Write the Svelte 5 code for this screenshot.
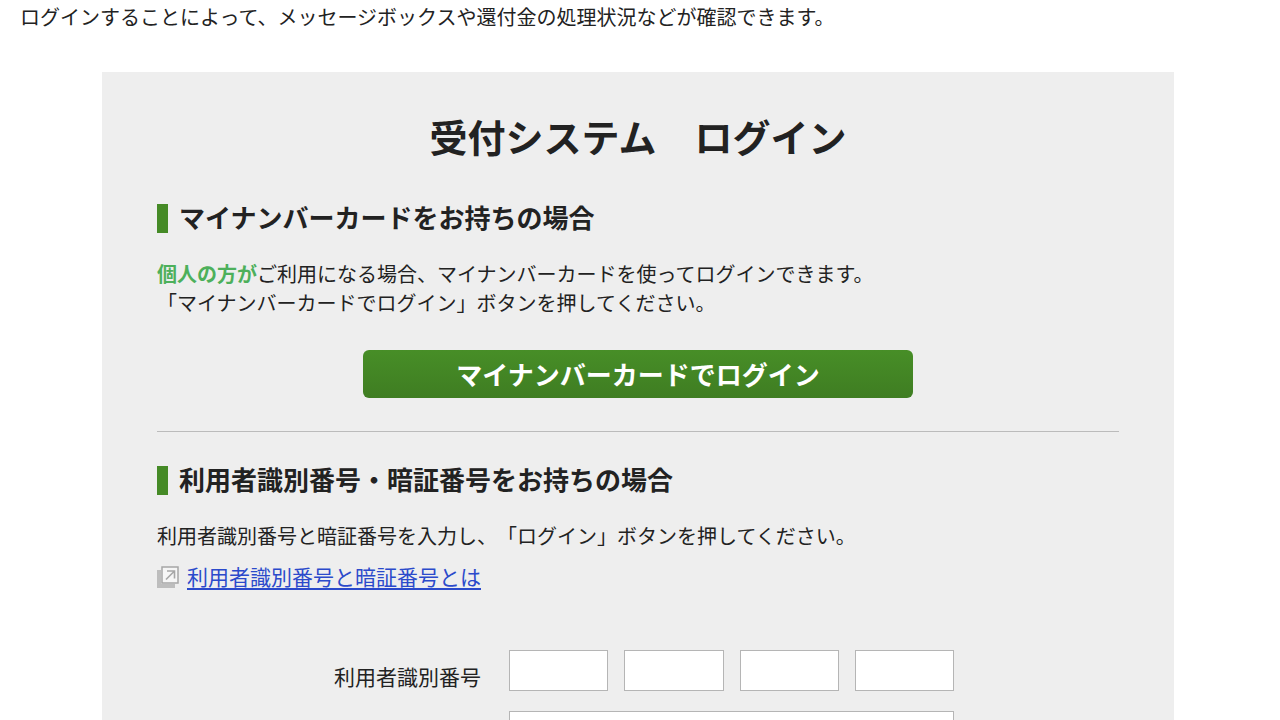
<script lang="ts">
  let userNumber = $state(['', '', '', '']);
  let password = $state('');
</script>

<main>
  <p class="lead">ログインすることによって、メッセージボックスや還付金の処理状況などが確認できます。</p>

  <div class="panel">
    <h1>受付システム　ログイン</h1>

    <section>
      <h2>マイナンバーカードをお持ちの場合</h2>
      <p>
        <strong>個人の方が</strong>ご利用になる場合、マイナンバーカードを使ってログインできます。<br />
        「マイナンバーカードでログイン」ボタンを押してください。
      </p>
      <button type="button">マイナンバーカードでログイン</button>
    </section>

    <hr />

    <section>
      <h2>利用者識別番号・暗証番号をお持ちの場合</h2>
      <p>利用者識別番号と暗証番号を入力し、「ログイン」ボタンを押してください。</p>
      <div class="help">
        <svg width="22" height="22" viewBox="0 0 22 22" aria-hidden="true">
          <path d="M0 4h4v14h14v4H0z" fill="#bdbdbd" />
          <rect x="5" y="1" width="16" height="16" fill="#f6f6f6" stroke="#a6a6a6" stroke-width="1.5" />
          <path d="M9 13.5 17 5.5M10 5h7.5v7.5" fill="none" stroke="#a6a6a6" stroke-width="1.6" />
        </svg>
        <a href="#about">利用者識別番号と暗証番号とは</a>
      </div>

      <form>
        <label for="number-0">利用者識別番号</label>
        <div class="numbers">
          {#each userNumber as _, i}
            <input
              id={`number-${i}`}
              type="text"
              maxlength="4"
              aria-label={i > 0 ? `利用者識別番号 ${i + 1}` : undefined}
              bind:value={userNumber[i]}
            />
          {/each}
        </div>
        <input class="password" type="password" aria-label="暗証番号" bind:value={password} />
      </form>
    </section>
  </div>
</main>

<style>
  :global(body) {
    background: #fff;
  }

  main {
    padding: 2px 0 0;
    color: #222;
    font-family: 'Noto Sans CJK JP', 'Noto Sans', sans-serif;
    font-size: 21px;
    line-height: 29px;
    text-spacing-trim: space-all;
  }

  p,
  h1,
  h2 {
    margin: 0;
  }

  p {
    font-size: 20px;
  }

  .lead {
    padding: 0 20px;
  }

  .panel {
    margin: 41px 106px 0 102px;
    padding: 40px 55px;
    background: #eee;
  }

  h1 {
    font-size: 38px;
    line-height: 48px;
    text-align: center;
    margin-bottom: 44px;
  }

  h2 {
    margin-bottom: 26px;
    padding: 0 0 3px 11px;
    border-left: 11px solid #458a26;
    font-size: 26px;
    line-height: 26px;
  }

  strong {
    color: #4db05b;
  }

  button {
    display: block;
    width: 550px;
    max-width: 100%;
    height: 48px;
    margin: 33px auto 0;
    padding: 0;
    border: 0;
    border-radius: 6px;
    background: linear-gradient(#478e27, #3f7d22);
    color: #fff;
    font-family: inherit;
    font-size: 26px;
    font-weight: 700;
    line-height: 48px;
    cursor: pointer;
  }

  hr {
    height: 1px;
    margin: 33px 0 34px;
    border: 0;
    background: #bbb;
  }

  .help {
    display: flex;
    align-items: center;
    gap: 8px;
    margin-top: 12px;
  }

  a {
    color: #2b4acb;
    text-decoration: underline;
    text-underline-offset: 3px;
  }

  form {
    display: grid;
    grid-template-columns: 324px 445px;
    gap: 20px 28px;
    align-items: end;
    margin-top: 59px;
  }

  label {
    text-align: right;
  }

  .numbers {
    display: grid;
    grid-template-columns: repeat(4, minmax(0, 1fr));
    gap: 16px;
  }

  input {
    box-sizing: border-box;
    width: 100%;
    height: 41px;
    padding: 4px 8px;
    border: 1px solid #b5b5b5;
    border-radius: 0;
    background: #fff;
    font: inherit;
  }

  .password {
    grid-column: 2;
  }
</style>
